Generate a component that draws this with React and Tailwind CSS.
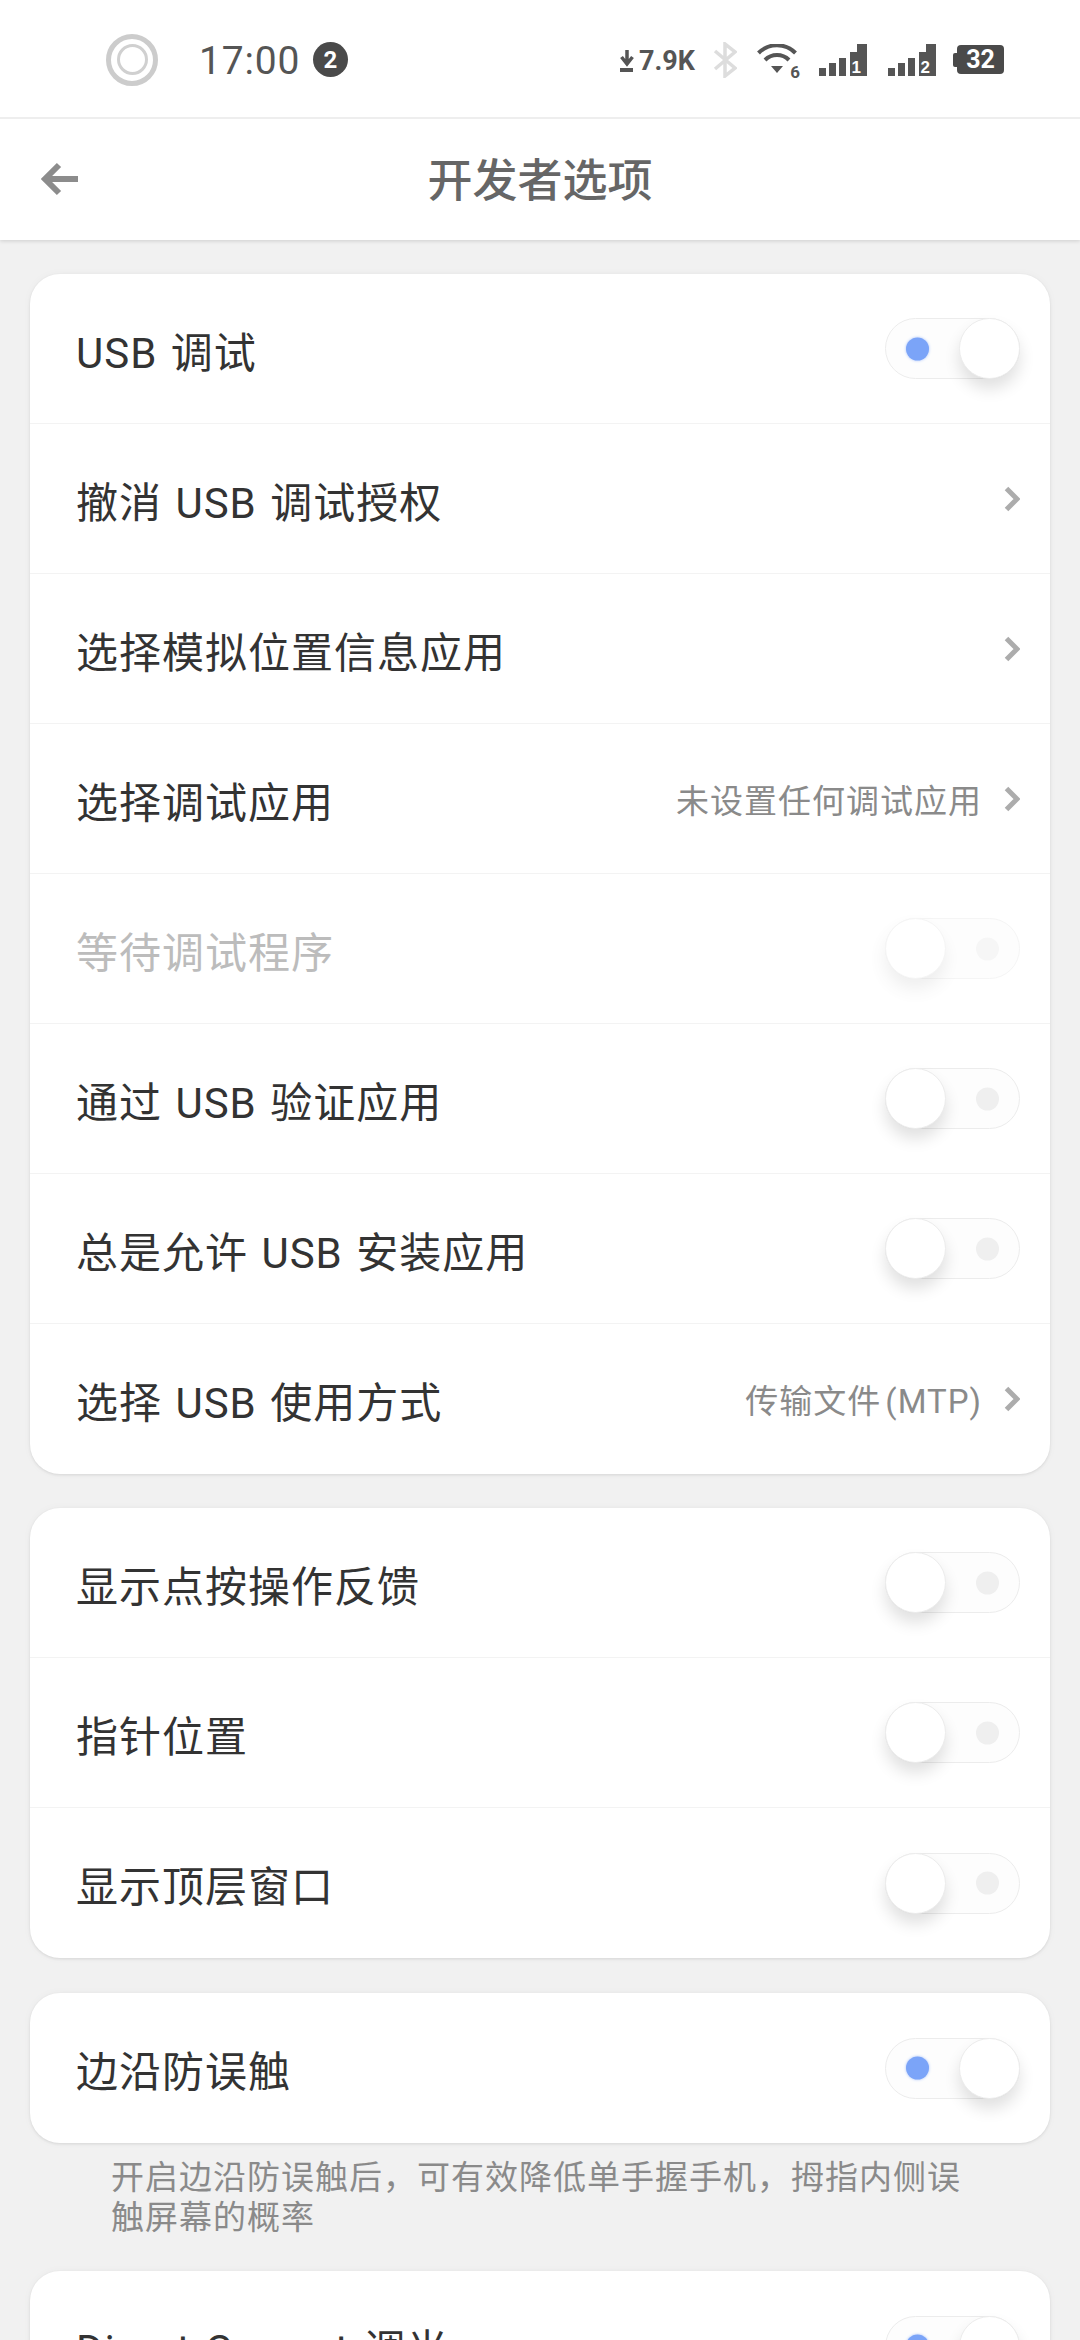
const CJK = "font-['Roboto','Noto_Sans_CJK_SC',sans-serif]"

function Toggle({ on, disabled }) {
  return (
    <div className={`relative h-[61px] w-[135px] shrink-0 rounded-full border border-[#ececec] bg-[#fdfdfd] ${disabled ? "opacity-50" : ""}`}>
      <div
        className={`absolute top-1/2 h-[23px] w-[23px] -translate-y-1/2 rounded-full ${
          on ? "left-[20px] bg-[#7ba4f8] shadow-[0_0_3px_#a9c3fb]" : "right-[20px] bg-[#efefef]"
        }`}
      ></div>
      <div
        className={`absolute -top-px h-[61px] w-[61px] rounded-full border border-[#ececec] bg-white shadow-[0_10px_16px_rgba(0,0,0,0.12)] ${
          on ? "-right-px" : "-left-px"
        }`}
      ></div>
    </div>
  )
}

function Chevron() {
  return (
    <svg width="16" height="26" viewBox="0 0 16 26" className="shrink-0">
      <path d="M2.5 2.5 L13 13 L2.5 23.5" fill="none" stroke="#acacac" strokeWidth="5" />
    </svg>
  )
}

function Row({ title, value, toggle, on, disabled, chevron, last }) {
  return (
    <div className={`flex h-[150px] items-center pl-[46px] pr-[30px] ${last ? "" : "border-b border-[#f3f3f3]"}`}>
      <span className={`flex-1 pt-[10px] text-[42px] leading-none tracking-[1px] [word-spacing:2px] ${disabled ? "text-[#bcbcbc]" : "text-[#333333]"}`}>
        {title}
      </span>
      {value && (
        <span className="mr-[22px] pt-[5px] text-[33px] leading-none tracking-[1px] text-[#8a8a8a] [word-spacing:-5px]">
          {value}
        </span>
      )}
      {chevron && <Chevron />}
      {toggle && <Toggle on={on} disabled={disabled} />}
    </div>
  )
}

function Card({ children }) {
  return (
    <div className="overflow-hidden rounded-[30px] bg-white shadow-[0_1px_3px_rgba(0,0,0,0.1),0_0_10px_rgba(0,0,0,0.03)]">
      {children}
    </div>
  )
}

function SignalBars({ sim }) {
  return (
    <div className="relative h-[32px] w-[48px] shrink-0">
      <svg width="48" height="32" viewBox="0 0 48 32" className="absolute inset-0">
        <rect x="0" y="24" width="7" height="8" fill="#555" />
        <rect x="10" y="19" width="7" height="13" fill="#555" />
        <rect x="20" y="14" width="7" height="18" fill="#555" />
        <path d="M31 8 H38 V0 H48 V32 H31 Z" fill="#555" />
      </svg>
      <span className="absolute bottom-[-1px] right-[6px] font-['Liberation_Sans',sans-serif] text-[17px] font-bold leading-[18px] text-white">
        {sim}
      </span>
    </div>
  )
}

function StatusBar() {
  return (
    <div className="flex h-[119px] items-center border-b-2 border-[#eeeeee] pl-[106px] pt-[2px]">
      <div className="flex h-[52px] w-[52px] shrink-0 items-center justify-center rounded-full border-[5px] border-[#cccccc]">
        <div className="h-[31px] w-[31px] rounded-full border-[3px] border-[#d0d0d0]"></div>
      </div>
      <span className="ml-[41px] mt-[3px] w-[102px] text-[39px] leading-none tracking-[0.8px] text-[#555555]">17:00</span>
      <span className="ml-[12px] flex h-[35px] w-[35px] shrink-0 items-center justify-center rounded-full bg-[#4a4a4a] text-[24px] font-bold leading-none text-white">
        2
      </span>
      <svg width="14" height="32" viewBox="0 0 14 32" className="ml-[272px] mt-[4px] shrink-0">
        <path d="M7 4 V17 M1.5 11 L7 18 L12.5 11" fill="none" stroke="#555" strokeWidth="3.5" />
        <rect x="0" y="22" width="13" height="4" fill="#555" />
      </svg>
      <span className="ml-[5px] mt-[4px] w-[60px] font-['Roboto',sans-serif] text-[27px] font-bold leading-none text-[#555555]">7.9K</span>
      <svg width="24" height="36" viewBox="0 0 24 36" className="ml-[14px] shrink-0">
        <path d="M2 9 L22 26 L12 34 V2 L22 10 L2 27" fill="none" stroke="#dddddd" strokeWidth="3.5" />
      </svg>
      <div className="relative ml-[20px] mt-[2px] h-[34px] w-[42px] shrink-0">
        <svg width="40" height="30" viewBox="0 0 40 30" className="absolute left-0 top-0">
          <path d="M1.5 9 A26 26 0 0 1 38.5 9" fill="none" stroke="#555" strokeWidth="4" />
          <path d="M8 16 A17 17 0 0 1 32 16" fill="none" stroke="#555" strokeWidth="4" />
          <path d="M14 22 H26 L20 29 Z" fill="#555" />
        </svg>
        <span className="absolute bottom-[-3px] right-[-1px] font-['Roboto',sans-serif] text-[17px] font-bold leading-none text-[#555555]">6</span>
      </div>
      <div className="ml-[20px]">
        <SignalBars sim="1" />
      </div>
      <div className="ml-[21px]">
        <SignalBars sim="2" />
      </div>
      <div className="ml-[17px] flex shrink-0 items-center">
        <div className="h-[14px] w-[4px] rounded-l-[2px] bg-[#4a4a4a]"></div>
        <div className="flex h-[29px] w-[47px] items-center justify-center rounded-[4px] bg-[#4a4a4a] font-['Roboto',sans-serif] text-[25px] font-bold leading-none text-white">
          32
        </div>
      </div>
    </div>
  )
}

function App() {
  return (
    <div className={`h-[2340px] w-[1080px] overflow-hidden bg-[#f1f1f1] ${CJK}`}>
      <div className="relative bg-white shadow-[0_1px_4px_rgba(0,0,0,0.15)]">
        <StatusBar />
        <div className="relative flex h-[121px] items-center justify-center pt-[3px]">
          <svg width="38" height="34" viewBox="0 0 38 34" className="absolute left-[40px] top-[43px]">
            <path d="M38 17 H5 M19 3 L5 17 L19 31" fill="none" stroke="#8c8c8c" strokeWidth="6" />
          </svg>
          <span className="text-[45px] font-medium leading-none text-[#666666]">开发者选项</span>
        </div>
      </div>

      <div className="flex flex-col px-[30px] pt-[34px]">
        <Card>
          <Row title="USB 调试" toggle on />
          <Row title="撤消 USB 调试授权" chevron />
          <Row title="选择模拟位置信息应用" chevron />
          <Row title="选择调试应用" value="未设置任何调试应用" chevron />
          <Row title="等待调试程序" toggle disabled />
          <Row title="通过 USB 验证应用" toggle />
          <Row title="总是允许 USB 安装应用" toggle />
          <Row title="选择 USB 使用方式" value="传输文件 (MTP)" chevron last />
        </Card>

        <div className="mt-[34px]">
          <Card>
            <Row title="显示点按操作反馈" toggle />
            <Row title="指针位置" toggle />
            <Row title="显示顶层窗口" toggle last />
          </Card>
        </div>

        <div className="mt-[35px]">
          <Card>
            <Row title="边沿防误触" toggle on last />
          </Card>
        </div>

        <p className="h-[128px] pl-[81px] pr-[82px] pt-[15px] text-[33px] leading-[40px] tracking-[1px] text-[#8a8a8a]">
          开启边沿防误触后，可有效降低单手握手机，拇指内侧误触屏幕的概率
        </p>

        <Card>
          <Row title="Direct Current 调光" toggle on last />
        </Card>
      </div>
    </div>
  )
}

export default App
